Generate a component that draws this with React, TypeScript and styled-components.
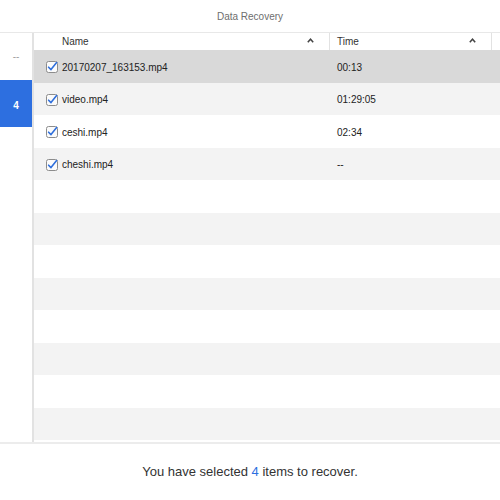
import React from 'react';
import styled, { createGlobalStyle } from 'styled-components';

const GlobalStyle = createGlobalStyle`
  html, body {
    margin: 0;
    padding: 0;
    background: #fff;
    font-family: "Liberation Sans", Arial, sans-serif;
  }
`;

const files = [
  { name: '20170207_163153.mp4', time: '00:13' },
  { name: 'video.mp4', time: '01:29:05' },
  { name: 'ceshi.mp4', time: '02:34' },
  { name: 'cheshi.mp4', time: '--' },
];

const TOTAL_ROWS = 12;

const CheckIcon = () => (
  <svg width="12" height="12" viewBox="0 0 12 12">
    <rect x="0.5" y="0.5" width="11" height="11" rx="2" fill="#fbfbfb" stroke="#8c8c8c" />
    <path d="M2.6 6.2 L5 8.6 L10.6 1.6" fill="none" stroke="#2f6fdc" strokeWidth="1.6" strokeLinecap="round" strokeLinejoin="round" />
  </svg>
);

const Caret = () => (
  <svg width="7" height="5" viewBox="0 0 7 5">
    <path d="M0.8 4.2 L3.5 1.2 L6.2 4.2" fill="none" stroke="#444" strokeWidth="1.5" />
  </svg>
);

const App = () => {
  const rows = Array.from({ length: TOTAL_ROWS }, (_, i) => files[i]);

  return (
    <>
      <GlobalStyle />
      <Window>
        <TitleBar>Data Recovery</TitleBar>
        <Main>
          <Sidebar>
            <SideItem>--</SideItem>
            <SideItem active>4</SideItem>
          </Sidebar>
          <Table>
            <HeaderRow>
              <HeaderCell first>
                Name
                <Caret />
              </HeaderCell>
              <HeaderCell>
                Time
                <Caret />
              </HeaderCell>
              <HeaderCell />
            </HeaderRow>
            {rows.map((f, i) => (
              <Row key={i} selected={i === 0} striped={i % 2 === 1}>
                <NameCell>
                  {f && <CheckIcon />}
                  {f && <span>{f.name}</span>}
                </NameCell>
                <TimeCell>{f ? f.time : ''}</TimeCell>
                <div />
              </Row>
            ))}
          </Table>
        </Main>
        <Footer>
          You have selected&nbsp;<Count>4</Count>&nbsp;items to recover.
        </Footer>
      </Window>
    </>
  );
};

export default App;

const Window = styled.div`
  width: 500px;
  height: 500px;
  display: flex;
  flex-direction: column;
  overflow: hidden;
`;

const TitleBar = styled.div`
  height: 32px;
  display: flex;
  align-items: center;
  justify-content: center;
  font-size: 10px;
  color: #6e6e6e;
  border-bottom: 1px solid #e8e8e8;
`;

const Main = styled.div`
  height: 409px;
  display: flex;
  border-bottom: 2px solid #ececec;
`;

const Sidebar = styled.div`
  width: 32px;
  flex-shrink: 0;
  border-right: 2px solid #e2e2e2;
  display: flex;
  flex-direction: column;
`;

const SideItem = styled.div<{ active?: boolean }>`
  height: 47px;
  display: flex;
  align-items: center;
  justify-content: center;
  font-size: 10px;
  font-weight: ${p => (p.active ? 'bold' : 'normal')};
  color: ${p => (p.active ? '#fff' : '#a0a0a0')};
  background: ${p => (p.active ? '#2d6fe0' : 'transparent')};
  padding-top: ${p => (p.active ? '4px' : '0')};
  box-sizing: border-box;
`;

const Table = styled.div`
  flex: 1;
  display: flex;
  flex-direction: column;
  overflow: hidden;
`;

const columns = `296px 162px 1fr`;

const HeaderRow = styled.div`
  height: 17px;
  flex-shrink: 0;
  display: grid;
  grid-template-columns: ${columns};
  font-size: 10px;
  color: #333;
`;

const HeaderCell = styled.div<{ first?: boolean }>`
  display: flex;
  align-items: center;
  justify-content: space-between;
  padding: 0 15px 0 ${p => (p.first ? '28px' : '7px')};
  border-right: 1px solid #e2e2e2;

  svg {
    margin-top: -3px;
  }
`;

const Row = styled.div<{ selected?: boolean; striped?: boolean }>`
  height: 32.5px;
  flex-shrink: 0;
  box-sizing: border-box;
  padding-top: 2px;
  display: grid;
  grid-template-columns: ${columns};
  align-items: center;
  font-size: 10px;
  color: #222;
  background: ${p => (p.selected ? '#d9d9d9' : p.striped ? '#f3f3f3' : '#fff')};
`;

const NameCell = styled.div`
  display: flex;
  align-items: center;
  gap: 4px;
  padding-left: 12px;
`;

const TimeCell = styled.div`
  padding-left: 7px;
`;

const Footer = styled.div`
  flex: 1;
  display: flex;
  align-items: center;
  justify-content: center;
  font-size: 13px;
  color: #333;
  padding-bottom: 2px;
`;

const Count = styled.span`
  color: #2d6fe0;
`;
